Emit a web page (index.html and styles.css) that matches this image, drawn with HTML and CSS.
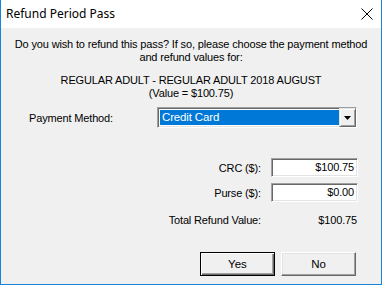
FILE: index.html
```html
<!DOCTYPE html>
<html>
<head>
    <title>Refund Period Pass</title>
    <link rel="stylesheet" href="styles.css">
</head>
<body>
    <div class="window">
        <div class="titlebar">
            <span class="title">Refund Period Pass</span>
            <svg class="close" width="12" height="12" viewBox="0 0 12 12">
                <path d="M0.5 0.5 L11.5 11.5 M11.5 0.5 L0.5 11.5" stroke="#000" stroke-width="1" fill="none"/>
            </svg>
        </div>
        <div class="content">
            <p class="intro">Do you wish to refund this pass? If so, please choose the payment method<br>and refund values for:</p>
            <p class="pass">REGULAR ADULT - REGULAR ADULT 2018 AUGUST<br>(Value = $100.75)</p>

            <div class="method">
                <label class="method-label">Payment Method:</label>
                <div class="combo">
                    <span class="combo-value">Credit Card</span>
                    <span class="combo-btn">
                        <svg width="7" height="4" viewBox="0 0 7 4"><path d="M0 0 H7 L3.5 4 Z" fill="#000"/></svg>
                    </span>
                </div>
            </div>

            <div class="amounts">
                <label class="amount-label">CRC ($):</label>
                <div class="field">$100.75</div>
                <label class="amount-label">Purse ($):</label>
                <div class="field">$0.00</div>
                <label class="amount-label total-row">Total Refund Value:</label>
                <div class="total total-row">$100.75</div>
            </div>

            <div class="buttons">
                <button class="btn btn-default">Yes</button>
                <button class="btn">No</button>
            </div>
        </div>
    </div>
</body>
</html>
```

FILE: styles.css
```css
body {
    margin: 0;
    font-family: "Liberation Sans", Arial, sans-serif;
    font-size: 11px;
    letter-spacing: -0.15px;
    color: #000;
}

.window {
    width: 382px;
    height: 285px;
    box-sizing: border-box;
    border: 1px solid #1883d7;
    border-top: none;
    display: flex;
    flex-direction: column;
}

.titlebar {
    height: 27px;
    flex: none;
    background: #fff;
    display: flex;
    align-items: center;
    justify-content: space-between;
    padding: 0 8px 1px 5px;
}

.title {
    font-family: "Noto Sans", sans-serif;
    font-size: 12px;
    letter-spacing: 0;
}

.close {
    display: block;
}

.content {
    flex: 1;
    background: #f0f0f0;
    padding-top: 10px;
}

p {
    margin: 0;
    text-align: center;
    line-height: 13px;
}

.pass {
    margin-top: 10px;
}

.method {
    display: flex;
    align-items: center;
    margin-top: 7px;
    padding-left: 28px;
}

.method-label {
    width: 128px;
}

.combo {
    width: 200px;
    height: 21px;
    box-sizing: border-box;
    border: 1px solid;
    border-color: #a0a0a0 #fff #fff #a0a0a0;
    box-shadow: inset 1px 1px #696969, inset -1px -1px #e3e3e3;
    background: #fff;
    padding: 2px;
    display: flex;
}

.combo-value {
    flex: 1;
    background: #0078d7;
    color: #fff;
    font-size: 11.5px;
    line-height: 15px;
    padding-left: 2px;
}

.combo-btn {
    width: 17px;
    box-sizing: border-box;
    background: #f0f0f0;
    border: 1px solid;
    border-color: #e3e3e3 #696969 #696969 #e3e3e3;
    box-shadow: inset 1px 1px #fff, inset -1px -1px #a0a0a0;
    display: flex;
    align-items: center;
    justify-content: center;
    margin: -2px -2px -2px 0;
}

.amounts {
    display: grid;
    grid-template-columns: 1fr 87px;
    column-gap: 10px;
    row-gap: 6px;
    align-items: center;
    margin: 30px 23px 0 0;
}

.amount-label {
    text-align: right;
}

.field {
    height: 19px;
    box-sizing: border-box;
    border: 1px solid;
    border-color: #a0a0a0 #fff #fff #a0a0a0;
    box-shadow: inset 1px 1px #696969, inset -1px -1px #e3e3e3;
    background: #fff;
    text-align: right;
    line-height: 17px;
    padding-right: 3px;
}

.total {
    text-align: right;
    line-height: 14px;
    padding-right: 1px;
}

.total-row {
    margin-top: 5px;
}

.buttons {
    display: flex;
    justify-content: flex-end;
    gap: 6px;
    margin-top: 25px;
    padding-right: 25px;
}

.btn {
    width: 75px;
    height: 24px;
    box-sizing: border-box;
    background: #f0f0f0;
    border: 1px solid;
    border-color: #fff #696969 #696969 #fff;
    box-shadow: inset -1px -1px #a0a0a0, inset 1px 1px #e3e3e3;
    font-family: "Liberation Sans", Arial, sans-serif;
    font-size: 11.5px;
    padding: 0;
}

.btn-default {
    border-color: #000;
    box-shadow: inset 1px 1px #fff, inset -1px -1px #696969, inset -2px -2px #a0a0a0;
}
```
